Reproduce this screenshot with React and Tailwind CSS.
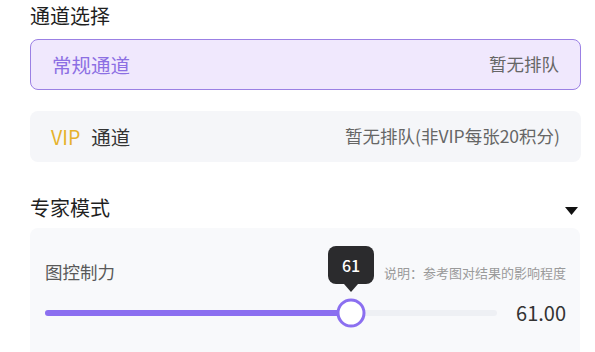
import React from "react";

const font = { fontFamily: '"Noto Sans CJK SC", "Noto Sans", sans-serif' };

function ChannelCard({ active, label, note }) {
  return (
    <div
      className={
        "flex items-center justify-between h-[51px] rounded-lg pl-[21px] pr-[21px] " +
        (active ? "bg-[#f0e8fd] border border-[#9b80e4]" : "bg-[#f5f6f9]")
      }
    >
      {label}
      <span className="text-[17.5px] text-[#666]">{note}</span>
    </div>
  );
}

export default function App() {
  const value = 61;
  const thumbX = 306;
  return (
    <div className="w-[595px] h-[352px] overflow-hidden bg-white pl-[30px] pr-[14px]" style={font}>
      <div className="pt-[2px] text-[20px] leading-[28px] text-[#1f1f1f]">通道选择</div>
      <div className="mt-[9px]">
        <ChannelCard active label={<span className="text-[19.5px] text-[#8c6fe3]">常规通道</span>} note="暂无排队" />
      </div>
      <div className="mt-[21px]">
        <ChannelCard
          label={
            <span className="text-[19.5px] text-[#333]">
              <span className="text-[#e6b22c] mr-[11px]">VIP</span>通道
            </span>
          }
          note="暂无排队(非VIP每张20积分)"
        />
      </div>

      <div className="mt-[32px] flex items-center justify-between pr-[3px]">
        <span className="text-[20px] leading-[28px] text-[#1f1f1f]">专家模式</span>
        <svg width="13" height="9" viewBox="0 0 13 9" className="mt-[6px]">
          <path d="M0 0 H13 L6.5 8 Z" fill="#111" />
        </svg>
      </div>

      <div className="mt-[6px] mr-[1px] h-[130px] rounded-t-lg bg-[#f8f9fb] pl-[15px] pr-[14px] pt-[31px]">
        <div className="flex items-center justify-between h-[26px]">
          <span className="text-[17.5px] leading-[26px] text-[#595959]">图控制力</span>
          <span className="text-[13px] leading-[20px] mt-[2px] text-[#9a9a9a]">说明：参考图对结果的影响程度</span>
        </div>
        <div className="mt-[13px] h-[29px] flex items-center">
          <div className="relative w-[452px] h-[6px] rounded-full bg-[#eef0f4]">
            <div className="h-full rounded-full bg-[#8b6ff0]" style={{ width: thumbX }} />
            <div
              className="absolute top-1/2 w-[29px] h-[29px] -translate-x-1/2 -translate-y-1/2 rounded-full border-[3px] border-[#8b6ff0] bg-white"
              style={{ left: thumbX }}
            />
            <div
              className="absolute bottom-[24px] -translate-x-1/2 flex flex-col items-center"
              style={{ left: thumbX }}
            >
              <div className="w-[46px] h-[38px] rounded-lg bg-[#2b2b2d] text-white text-[16px] font-medium flex items-center justify-center">
                {value}
              </div>
              <div className="w-0 h-0 border-l-[7px] border-r-[7px] border-t-[8px] border-l-transparent border-r-transparent border-t-[#2b2b2d]" />
            </div>
          </div>
          <span className="ml-auto text-[20px] text-[#333]">{value.toFixed(2)}</span>
        </div>
      </div>
    </div>
  );
}
